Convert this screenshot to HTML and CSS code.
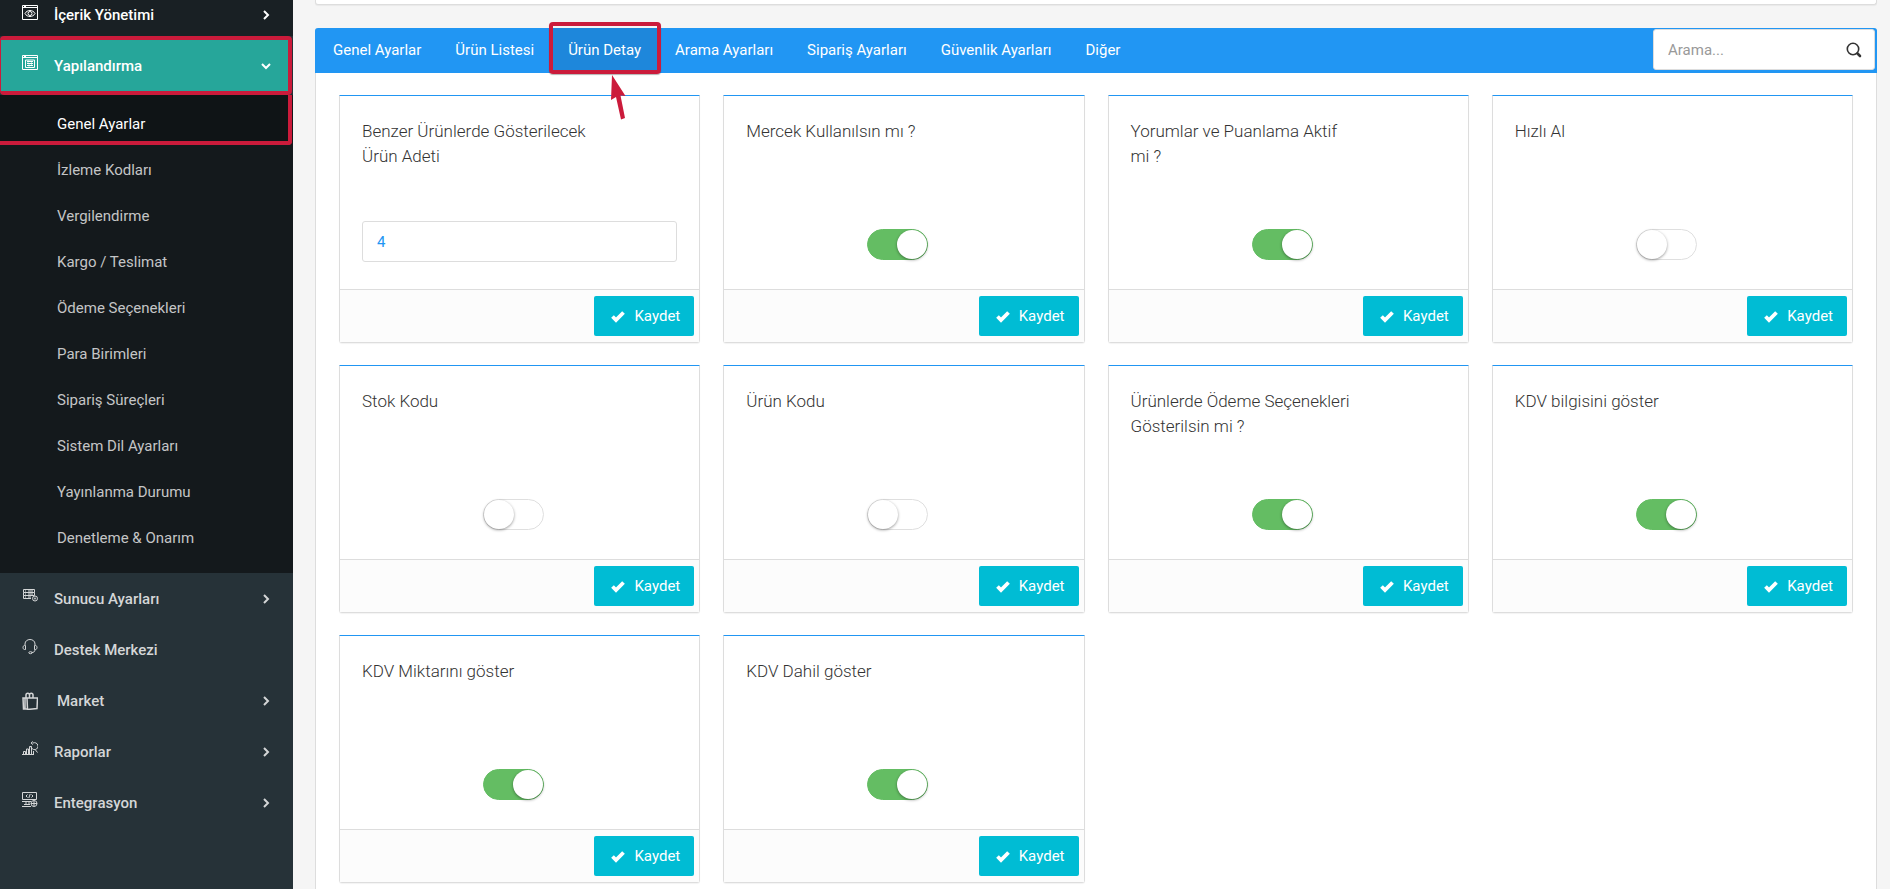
FILE: index.html
```html
<!DOCTYPE html>
<html lang="tr">
<head>
<meta charset="utf-8">
<title>Genel Ayarlar</title>
<link rel="stylesheet" href="styles.css">
</head>
<body>
<svg class="defs" aria-hidden="true">
  <symbol id="right" viewBox="0 0 12 12"><path d="M4 2l4 4-4 4" fill="none" stroke="currentColor" stroke-width="2"/></symbol>
  <symbol id="down" viewBox="0 0 12 12"><path d="M2 4l4 4 4-4" fill="none" stroke="currentColor" stroke-width="2"/></symbol>
  <symbol id="check" viewBox="0 0 16 16"><path d="M2.5 8.500l3.500 3.500L13.500 4.500" fill="none" stroke="currentColor" stroke-width="3.800"/></symbol>
</svg>
<div class="app">
  <aside class="sidebar">
    <nav>
      <a class="item above" href="#">
        <svg class="icon" viewBox="0 0 16 16"><path d="M.5.5h15v14H.5zM.5 2.500h15M2 1.500h2"/><path d="M3 8.500c2-4 8-4 10 0c-2 4-8 4-10 0z"/><circle cx="8" cy="8.500" r="2"/></svg>
        <span>İçerik Yönetimi</span><svg class="arrow"><use href="#right"/></svg></a>
      <div class="marked-open">
      <a class="item open" href="#">
        <svg class="icon" viewBox="0 0 16 16"><path d="M.5.5h15v14H.5zM.5 2.500h15M2 1.500h2M3.500 5v7.500h9V5zM5 6.500h6M5 8.500h6M5 10.500h6M6 5.500v2M9.500 7.500v2M7 9.500v2"/></svg>
        <span>Yapılandırma</span><svg class="arrow"><use href="#down"/></svg></a>
      </div>
      <div class="submenu">
        <a class="current" href="#">Genel Ayarlar</a>
        <a href="#">İzleme Kodları</a>
        <a href="#">Vergilendirme</a>
        <a href="#">Kargo / Teslimat</a>
        <a href="#">Ödeme Seçenekleri</a>
        <a href="#">Para Birimleri</a>
        <a href="#">Sipariş Süreçleri</a>
        <a href="#">Sistem Dil Ayarları</a>
        <a href="#">Yayınlanma Durumu</a>
        <a href="#">Denetleme &amp; Onarım</a>
      </div>
      <a class="item" href="#">
        <svg class="icon" viewBox="0 0 16 16"><path d="M1.500 1.500h11v3h-11zM1.500 4.500v3h11v-3M1.500 7.500v3H9M3 3h1M6 3h5M3 6h1M6 6h5M3 9h1M6 9h3"/><circle cx="13" cy="10.500" r="2.500"/><circle cx="13" cy="10.500" r=".7"/></svg>
        <span>Sunucu Ayarları</span><svg class="arrow"><use href="#right"/></svg></a>
      <a class="item" href="#">
        <svg class="icon" viewBox="0 0 16 16"><path d="M3 6V5c0-6 10-6 10 0v1M3.500 6.500v4H2.500c-2 0-2-4 0-4zM12.500 6.500v4h1c2 0 2-4 0-4zM13 10.500c0 2-1 3-3.500 3"/><ellipse cx="8.500" cy="13.700" rx="1.700" ry="1"/></svg>
        <span>Destek Merkezi</span></a>
      <a class="item market" href="#">
        <svg class="icon bag" viewBox="0 0 16 18"><path d="M5 6h10.500l-.5 10.500-9.500 1zM5 6H1l.5 11h4M3 6v11M4 5.500V3c0-2.500 3.500-2.500 3.500 0v2.500M7.500 5V3c0-2.500 3.500-2.500 3.500 0v3"/></svg>
        <span>Market</span><svg class="arrow"><use href="#right"/></svg></a>
      <a class="item" href="#">
        <svg class="icon" viewBox="0 0 16 16"><path d="M0 13.500h12M1.500 13.500v-3h2v3M4.500 13.500V8h2v5.500M7.500 13.500v-8h2v8M11.500 13.500V10"/><path d="M9 5.500a3.500 3.500 0 1 0 2-3.500M13.500 9l2 2.500M11 .5l-2 1.500 2 1.500"/></svg>
        <span>Raporlar</span><svg class="arrow"><use href="#right"/></svg></a>
      <a class="item" href="#">
        <svg class="icon" viewBox="0 0 16 16"><path d="M.5.500h14v7H.500zM5.500 2.500L4 4l1.500 1.500M9.500 2.500L11 4 9.500 5.500M8.200 2L6.800 6M0 9.500h9M4 9.500v3M7 9.500v3M0 14.500h9M2 12.500h6"/><circle cx="12" cy="11.500" r="3"/><path d="M9 11.500h6M12 8.500v6"/></svg>
        <span>Entegrasyon</span><svg class="arrow"><use href="#right"/></svg></a>
    </nav>
  </aside>
  <main class="content">
    <div class="previous"></div>
    <section class="panel">
      <header class="tabs">
        <nav>
          <a href="#">Genel Ayarlar</a>
          <a href="#">Ürün Listesi</a>
          <a class="active" href="#">Ürün Detay<svg class="pointer" viewBox="0 0 16 45"><path d="M2 0l13.500 21-5-.5L15 43l-4 1.500L6 22l-5 3z" fill="#cb1b3b"/></svg></a>
          <a href="#">Arama Ayarları</a>
          <a href="#">Sipariş Ayarları</a>
          <a href="#">Güvenlik Ayarları</a>
          <a href="#">Diğer</a>
        </nav>
        <div class="search">
          <input type="search" placeholder="Arama..." aria-label="Arama">
          <svg viewBox="0 0 16 16"><circle cx="7" cy="7" r="5.700" fill="none" stroke="#333" stroke-width="1.600"/><path d="M11.500 11.500l2.500 2.500" stroke="#333" stroke-width="2.600" stroke-linecap="round"/></svg>
        </div>
      </header>
      <div class="cards">
        <form class="card"><div class="body"><label for="f1">Benzer Ürünlerde Gösterilecek Ürün Adeti</label><input class="number" id="f1" type="text" value="4"></div><footer><button type="button"><svg><use href="#check"/></svg>Kaydet</button></footer></form>
        <form class="card"><div class="body"><label for="f2">Mercek Kullanılsın mı ?</label><input class="switch" id="f2" type="checkbox" checked></div><footer><button type="button"><svg><use href="#check"/></svg>Kaydet</button></footer></form>
        <form class="card"><div class="body"><label for="f3">Yorumlar ve Puanlama Aktif mi ?</label><input class="switch" id="f3" type="checkbox" checked></div><footer><button type="button"><svg><use href="#check"/></svg>Kaydet</button></footer></form>
        <form class="card"><div class="body"><label for="f4">Hızlı Al</label><input class="switch" id="f4" type="checkbox"></div><footer><button type="button"><svg><use href="#check"/></svg>Kaydet</button></footer></form>
        <form class="card"><div class="body"><label for="f5">Stok Kodu</label><input class="switch" id="f5" type="checkbox"></div><footer><button type="button"><svg><use href="#check"/></svg>Kaydet</button></footer></form>
        <form class="card"><div class="body"><label for="f6">Ürün Kodu</label><input class="switch" id="f6" type="checkbox"></div><footer><button type="button"><svg><use href="#check"/></svg>Kaydet</button></footer></form>
        <form class="card"><div class="body"><label for="f7">Ürünlerde Ödeme Seçenekleri Gösterilsin mi ?</label><input class="switch" id="f7" type="checkbox" checked></div><footer><button type="button"><svg><use href="#check"/></svg>Kaydet</button></footer></form>
        <form class="card"><div class="body"><label for="f8">KDV bilgisini göster</label><input class="switch" id="f8" type="checkbox" checked></div><footer><button type="button"><svg><use href="#check"/></svg>Kaydet</button></footer></form>
        <form class="card"><div class="body"><label for="f9">KDV Miktarını göster</label><input class="switch" id="f9" type="checkbox" checked></div><footer><button type="button"><svg><use href="#check"/></svg>Kaydet</button></footer></form>
        <form class="card"><div class="body"><label for="f10">KDV Dahil göster</label><input class="switch" id="f10" type="checkbox" checked></div><footer><button type="button"><svg><use href="#check"/></svg>Kaydet</button></footer></form>
      </div>
    </section>
  </main>
</div>
</body>
</html>
```

FILE: styles.css
```css
* { box-sizing: border-box; }
body { margin: 0; background: #f5f5f5; color: #333; font: 15px/24px Roboto, "Liberation Sans", sans-serif; height: 100vh; overflow: hidden; }
a { color: inherit; text-decoration: none; }
.defs { position: absolute; width: 0; height: 0; }
.app { display: flex; height: 100%; }
.sidebar { flex: 0 0 293px; background: #263238; color: #d4d6d7; }
.item { display: flex; align-items: center; height: 51px; padding: 0 21px 0 22px; font-weight: 500; }
.item span { flex: 1; margin-left: 16px; }
.market span { margin-left: 19px; }
.icon { width: 16px; height: 16px; margin-bottom: 5px; fill: none; stroke: currentColor; stroke-width: 1; }
.icon.bag { height: 18px; margin-bottom: 0; stroke-width: 1.5; }
.arrow { width: 12px; height: 12px; }
.above { height: 36px; padding-bottom: 6px; background: #192024; color: #fff; }
.open { background: #26a69a; color: #fff; }
.marked-open { background: #26a69a; color: #fff; border: 4px solid #cb1b3b; border-left-width: 1px; border-radius: 4px; margin-right: 1px; }
.marked-open .item { padding-left: 21px; padding-right: 16px; }
.submenu { background: #14191c; padding-bottom: 12px; color: #c4c5c6; }
.submenu a { display: block; padding: 11px 20px 11px 57px; }
.submenu .current { margin: 0 1px 2px 0; padding-top: 17px; padding-bottom: 5px; border: 4px solid #cb1b3b; border-width: 0 4px 4px 0; border-radius: 0 0 4px 0; background: #0f1416; color: #fff; }
.content { flex: 1; min-width: 0; padding: 0 13px 0 22px; overflow: hidden; }
.previous { height: 5px; background: #fff; border: 1px solid #ddd; border-top: 0; border-radius: 0 0 3px 3px; margin-bottom: 23px; box-shadow: 0 1px 1px rgba(0,0,0,.05); }
.panel { background: #fff; border: 1px solid #ddd; border-top: 0; border-radius: 3px; padding-bottom: 22px; }
.tabs { display: flex; justify-content: space-between; height: 45px; margin: 0 -1px 22px; background: #2196f3; color: #fff; border-radius: 3px 3px 0 0; }
.tabs nav { display: flex; padding-left: 1px; }
.tabs nav a { padding: 10px 17px 11px; }
.tabs nav .active { position: relative; background: #1e87db; }
/* highlight frame around the active tab */
.active::after { content: ""; position: absolute; inset: -6px -3px -1px -2px; border: 4px solid #cb1b3b; border-radius: 4px; box-shadow: 0 1px 1px rgba(0,0,0,.3); }
.pointer { position: absolute; z-index: 1; width: 16px; height: 45px; left: 59px; top: 47px; }
.search { display: flex; align-items: center; width: 222px; height: 41px; margin: 1px 2px 0 0; padding: 0 12px 0 14px; background: #fff; border: 1px solid #ddd; border-radius: 3px; }
.search input { flex: 1; min-width: 0; padding: 0; border: 0; outline: 0; background: none; font: inherit; color: #333; }
.search input::placeholder { color: #999; }
.search svg { width: 16px; height: 16px; }
.cards { display: grid; grid-template-columns: repeat(4, minmax(0, 1fr)); gap: 22px 23px; padding: 0 23px; }
.card { margin: 0; border: 1px solid #ddd; border-top-color: #2196f3; border-radius: 0 0 3px 3px; box-shadow: 0 1px 1px rgba(0,0,0,.05); }
.body { display: flex; flex-direction: column; height: 193px; padding: 23px 22px 0; }
.body label { width: 72%; height: 102px; font-size: 17px; font-weight: 300; line-height: 25px; }
.number { width: 100%; height: 41px; padding: 0 14px; border: 1px solid #ddd; border-radius: 3px; font: inherit; color: #2196f3; }
.switch { appearance: none; align-self: center; width: 61px; height: 31px; margin: 8px 12px 0 0; border-radius: 16px; background: #fff; border: 1px solid #dfdfdf; cursor: pointer; }
.switch::before { content: ""; display: block; width: 30px; height: 29px; border-radius: 50%; background: #fff; box-shadow: 0 1px 3px rgba(0,0,0,.4); }
.switch:checked { background: #64bd63; border-color: #64bd63; }
.switch:checked::before { margin-left: 29px; }
.card footer { display: flex; justify-content: flex-end; padding: 6px 5px; border-top: 1px solid #ddd; background: #fcfcfc; }
.card button { display: flex; align-items: center; height: 40px; padding: 0 14px 0 16px; border: 0; border-radius: 2px; background: #00bcd4; color: #fff; font: inherit; cursor: pointer; }
.card button svg { width: 16px; height: 16px; margin-right: 8px; }
```
